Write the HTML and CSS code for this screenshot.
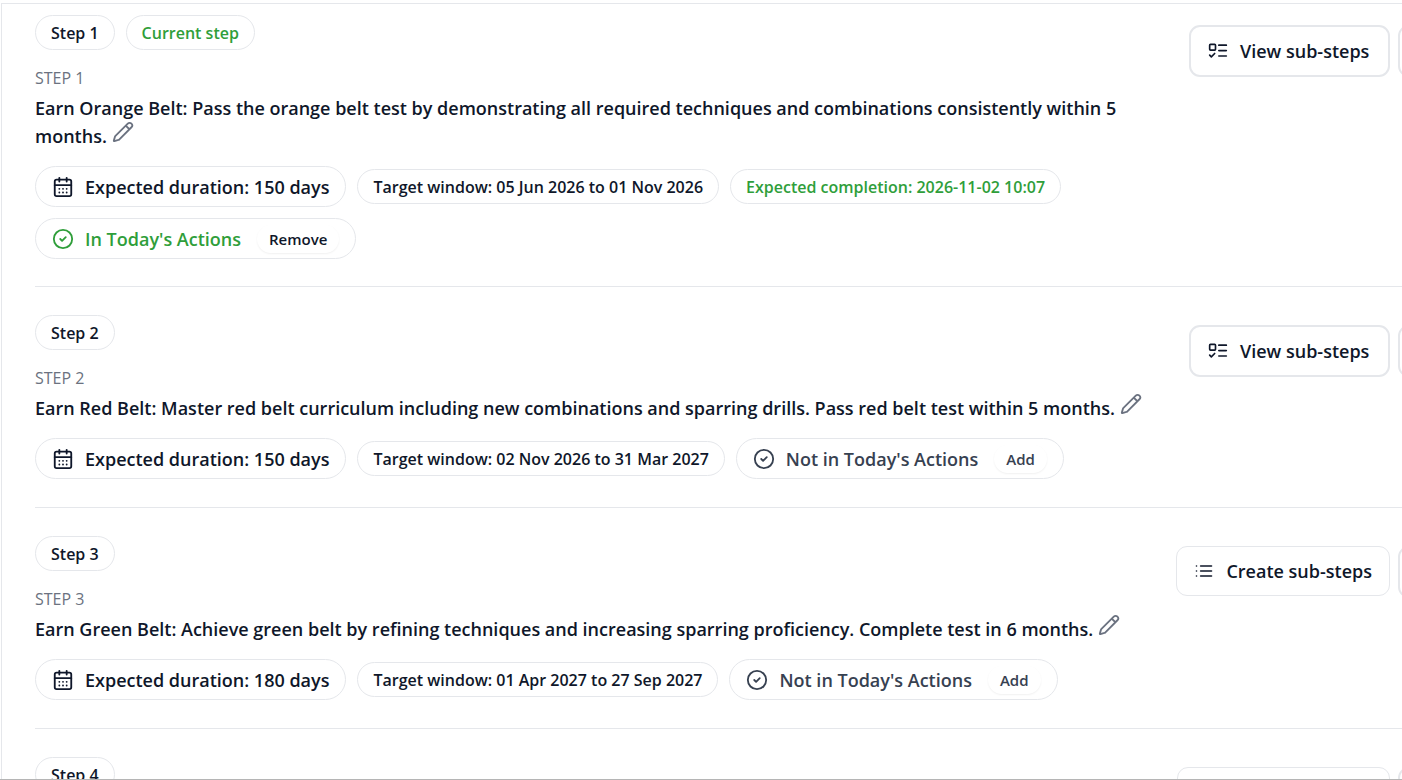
FILE: index.html
```html
<!DOCTYPE html>
<html lang="en">
<head>
    <meta charset="utf-8">
    <meta name="viewport" content="width=device-width, initial-scale=1">
    <title>Goal steps</title>
    <link rel="stylesheet" href="styles.css">
</head>
<body>
<!-- shared icons -->
<svg class="sprite" aria-hidden="true">
    <symbol id="calendar" viewBox="0 0 24 24">
        <rect x="3" y="4" width="18" height="18" rx="2"/>
        <path d="M8 2v4M16 2v4M3 10h18M8 14h.01M12 14h.01M16 14h.01M8 18h.01M12 18h.01M16 18h.01"/>
    </symbol>
    <symbol id="check" viewBox="0 0 24 24">
        <circle cx="12" cy="12" r="10"/>
        <path d="m9 12 2 2 4-4"/>
    </symbol>
    <symbol id="pencil" viewBox="0 0 24 24">
        <path d="M21.2 6.8a1 1 0 0 0-4-4L3.8 16.2a2 2 0 0 0-.5.8L2 21.4a.5.5 0 0 0 .6.6L7 20.7a2 2 0 0 0 .8-.5zM15 5l4 4"/>
    </symbol>
    <symbol id="todo" viewBox="0 0 24 24">
        <rect x="2" y="4" width="7" height="7" rx="1"/>
        <path d="m2 17 2 2 4-4M13 5h9M13 11.5h9M13 18h9"/>
    </symbol>
    <symbol id="list" viewBox="0 0 24 24">
        <path d="M3 6h.01M3 12h.01M3 18h.01M8 6h13M8 12h13M8 18h13"/>
    </symbol>
</svg>

<main class="card">
    <section class="step">
        <div class="step-body">
            <div class="chips">
                <span class="chip">Step 1</span>
                <span class="chip green">Current step</span>
            </div>
            <p class="label">STEP 1</p>
            <h3 class="title">Earn Orange Belt: Pass the orange belt test by demonstrating all required techniques and combinations consistently within 5 months. <button class="edit" aria-label="Edit step 1"><svg class="icon"><use href="#pencil"/></svg></button></h3>
            <div class="chips">
                <span class="chip large"><svg class="icon"><use href="#calendar"/></svg>Expected duration: 150 days</span>
                <span class="chip">Target window: 05 Jun 2026 to 01 Nov 2026</span>
                <span class="chip green">Expected completion: 2026-11-02 10:07</span>
                <span class="chip large green"><svg class="icon"><use href="#check"/></svg>In Today's Actions <button class="toggle">Remove</button></span>
            </div>
        </div>
        <div class="actions">
            <button class="btn btn-strong"><svg class="icon"><use href="#todo"/></svg>View sub-steps</button>
            <button class="btn btn-strong btn-more" aria-label="More options"></button>
        </div>
    </section>

    <section class="step">
        <div class="step-body">
            <div class="chips">
                <span class="chip">Step 2</span>
            </div>
            <p class="label">STEP 2</p>
            <h3 class="title">Earn Red Belt: Master red belt curriculum including new combinations and sparring drills. Pass red belt test within 5 months. <button class="edit" aria-label="Edit step 2"><svg class="icon"><use href="#pencil"/></svg></button></h3>
            <div class="chips">
                <span class="chip large"><svg class="icon"><use href="#calendar"/></svg>Expected duration: 150 days</span>
                <span class="chip">Target window: 02 Nov 2026 to 31 Mar 2027</span>
                <span class="chip large muted"><svg class="icon"><use href="#check"/></svg>Not in Today's Actions <button class="toggle muted">Add</button></span>
            </div>
        </div>
        <div class="actions">
            <button class="btn btn-strong"><svg class="icon"><use href="#todo"/></svg>View sub-steps</button>
            <button class="btn btn-strong btn-more" aria-label="More options"></button>
        </div>
    </section>

    <section class="step">
        <div class="step-body">
            <div class="chips">
                <span class="chip">Step 3</span>
            </div>
            <p class="label">STEP 3</p>
            <h3 class="title">Earn Green Belt: Achieve green belt by refining techniques and increasing sparring proficiency. Complete test in 6 months. <button class="edit" aria-label="Edit step 3"><svg class="icon"><use href="#pencil"/></svg></button></h3>
            <div class="chips">
                <span class="chip large"><svg class="icon"><use href="#calendar"/></svg>Expected duration: 180 days</span>
                <span class="chip">Target window: 01 Apr 2027 to 27 Sep 2027</span>
                <span class="chip large muted"><svg class="icon"><use href="#check"/></svg>Not in Today's Actions <button class="toggle muted">Add</button></span>
            </div>
        </div>
        <div class="actions">
            <button class="btn"><svg class="icon"><use href="#list"/></svg>Create sub-steps</button>
            <button class="btn btn-strong btn-more" aria-label="More options"></button>
        </div>
    </section>

    <section class="step">
        <div class="step-body">
            <div class="chips">
                <span class="chip">Step 4</span>
            </div>
        </div>
        <div class="actions">
            <button class="btn" aria-label="Create sub-steps"></button>
            <button class="btn btn-strong btn-more" aria-label="More options"></button>
        </div>
    </section>
</main>
</body>
</html>
```
FILE: styles.css
```css
* {
    box-sizing: border-box;
}
body {
    height: 100vh;
    margin: 0;
    padding: 3px 0 0 1px;
    overflow: hidden;
    border-bottom: 1px solid #b5b5b5;
    background: #fff;
    color: #0f172a;
    font-family: "Open Sans", "Noto Sans", sans-serif;
    font-weight: 600;
}
button {
    font: inherit;
    color: inherit;
    cursor: pointer;
}
.sprite {
    display: none;
}
.icon {
    flex: none;
    width: 22px;
    height: 22px;
    fill: none;
    stroke: currentColor;
    stroke-width: 2;
    stroke-linecap: round;
    stroke-linejoin: round;
}

/* the card runs past the right edge of the window */
.card {
    margin-right: -82px;
    padding: 0 33px;
    border: 1px solid #e5e7eb;
}
.step {
    display: flex;
    align-items: flex-start;
    gap: 24px;
    padding: 28px 0;
    border-bottom: 1px solid #e5e7eb;
}
.step:first-child {
    padding: 11px 0 27px;
}
.step-body {
    flex: 1;
    min-width: 0;
}
.chips {
    display: flex;
    flex-wrap: wrap;
    align-items: center;
    gap: 11px;
}
.chip {
    display: inline-flex;
    align-items: center;
    height: 35px;
    padding: 0 15px;
    border: 1px solid #e5e7eb;
    border-radius: 21px;
    font-size: 16px;
    white-space: nowrap;
}
.chip.large {
    height: 41px;
    padding: 0 16px;
    font-size: 18px;
}
.chip .icon {
    margin-right: 11px;
}
.green {
    color: #2f9e3a;
}
.muted {
    color: #374151;
}
.toggle {
    height: 28px;
    margin-left: 16px;
    padding: 0 12px;
    border: 0;
    border-radius: 14px;
    background: #fff;
    box-shadow: 0 1px 2px rgba(0, 0, 0, 0.06);
    color: #0f172a;
    font-size: 15px;
}
.toggle.muted {
    color: #374151;
}
.label {
    margin: 18px 0 6px;
    color: #6b7280;
    font-size: 16px;
    font-weight: 400;
    line-height: 20px;
}
.title {
    margin: 0 0 16px;
    font-size: 18px;
    font-weight: 600;
    line-height: 28px;
}
.edit {
    margin-top: -6px;
    padding: 0;
    border: 0;
    background: none;
    color: #6b7280;
    line-height: 0;
}
.actions {
    display: flex;
    gap: 8px;
    margin-top: 10px;
}
.btn {
    display: inline-flex;
    align-items: center;
    gap: 12px;
    min-width: 201px;
    height: 50px;
    padding: 0 17px;
    border: 1px solid #e5e7eb;
    border-radius: 11px;
    background: #fff;
    font-size: 18px;
    white-space: nowrap;
}
.btn .icon {
    width: 20px;
    height: 20px;
}
.btn:empty {
    min-width: 213px;
}
.btn-strong {
    height: 52px;
    border: 2px solid #e5e7eb;
}
.btn-more:empty {
    min-width: 52px;
}
```
